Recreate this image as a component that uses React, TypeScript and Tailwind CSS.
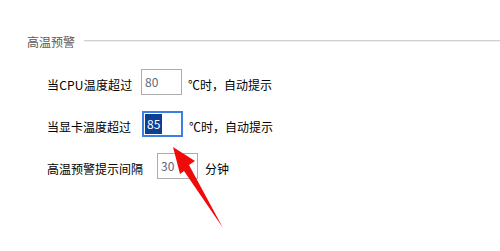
import React from "react";

const font = { fontFamily: '"Noto Sans CJK SC", "Noto Sans", sans-serif' };

export default function App() {
  return (
    <div className="relative w-[500px] h-[251px] bg-white overflow-hidden" style={font}>
      <div className="flex flex-col pt-[34px]">
        <div className="flex items-center h-4">
          <span className="pl-[27px] text-[12px] leading-4 text-[#5a5a5a]">高温预警</span>
          <div className="ml-[9px] flex-1 h-[2px] border-t border-[#d0d0d0] border-b-[#f0f0f0] border-b mt-[-2px]" />
        </div>

        <div className="flex items-start pl-[47px] mt-[19px]">
          <span className="w-[94px] text-[12px] leading-4 text-black mt-[8px] tracking-[0.2px]">当CPU温度超过</span>
          <div className="w-[41px] h-[26px] border border-[#acacac] flex items-center pl-[3px]">
            <span className="text-[12px] leading-4 text-[#5c6780]">80</span>
          </div>
          <span className="ml-[6px] text-[12px] leading-4 text-black mt-[8px]">℃时，自动提示</span>
        </div>

        <div className="flex items-start pl-[47px] mt-[16px]">
          <span className="w-[95px] text-[12px] leading-4 text-black mt-[8px]">当显卡温度超过</span>
          <div className="w-[41px] h-[26px] border-2 border-[#3b7fe0] flex items-center pl-[1px]">
            <span className="bg-[#0c3e96] text-white text-[12px] leading-[20px] px-[2px]">85</span>
          </div>
          <span className="ml-[6px] text-[12px] leading-4 text-black mt-[8px]">℃时，自动提示</span>
        </div>

        <div className="flex items-start pl-[47px] mt-[16px]">
          <span className="w-[110px] text-[12px] leading-4 text-black mt-[8px]">高温预警提示间隔</span>
          <div className="w-[41px] h-[26px] border border-[#acacac] flex items-center pl-[3px]">
            <span className="text-[12px] leading-4 text-[#5c6780]">30</span>
          </div>
          <span className="ml-[7px] text-[12px] leading-4 text-black mt-[8px]">分钟</span>
        </div>
      </div>

      <svg className="absolute left-0 top-0" width="500" height="251" viewBox="0 0 500 251">
        <polygon
          points="173,147 195,161 189,165 223,228 184,171 180,174"
          fill="#f00b0b"
        />
      </svg>
    </div>
  );
}
